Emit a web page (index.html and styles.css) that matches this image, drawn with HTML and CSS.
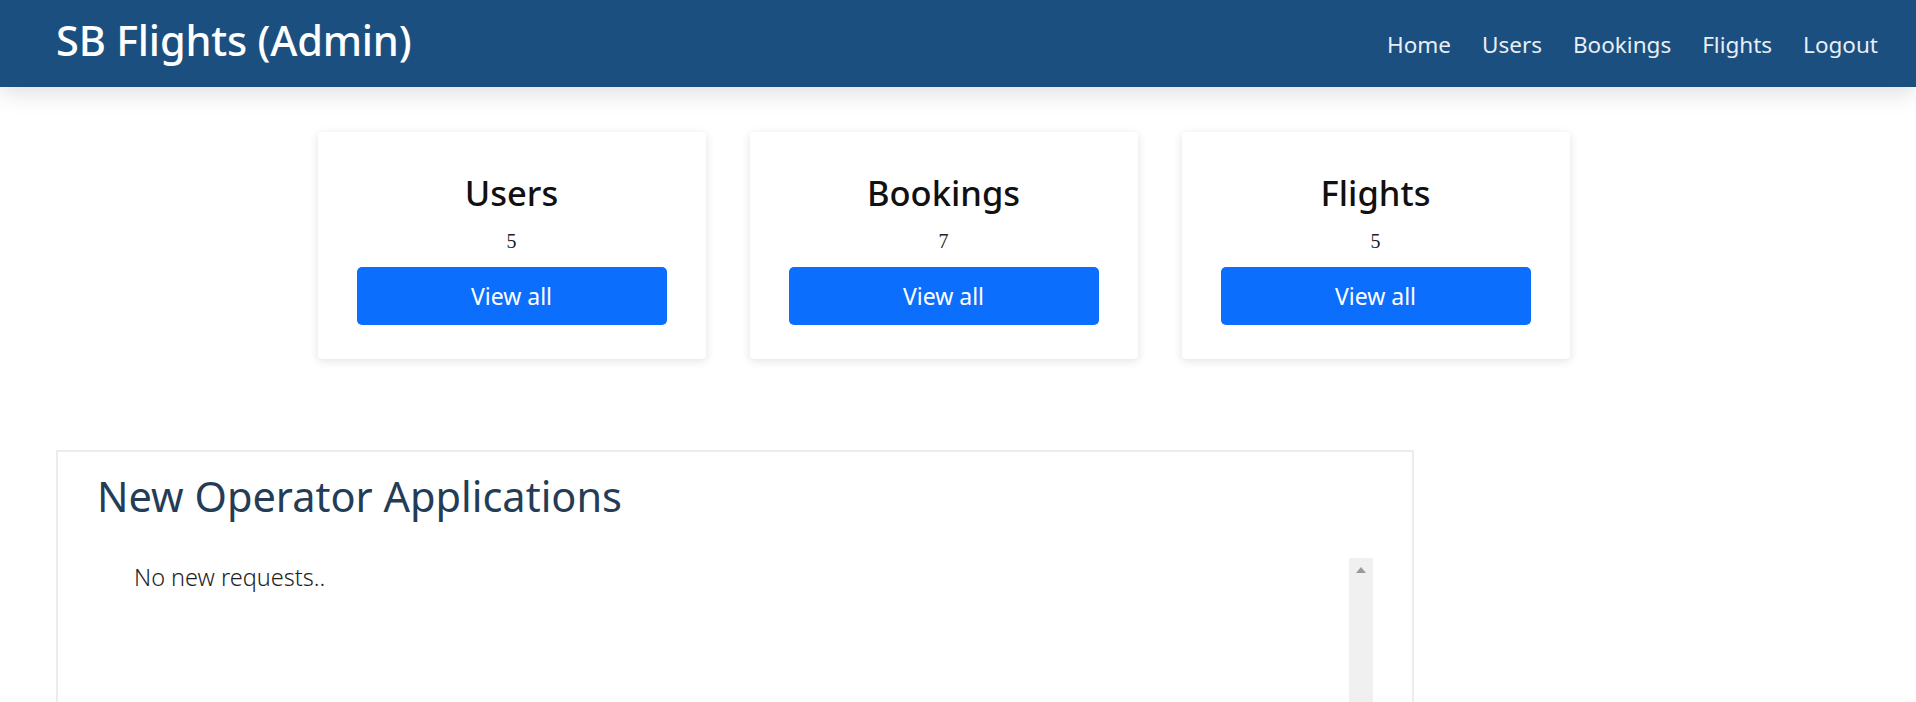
FILE: index.html
```html
<!DOCTYPE html>
<html>
<head>
<meta charset="utf-8">
<link rel="stylesheet" href="styles.css">
</head>
<body>
<header class="navbar">
  <div class="brand">SB Flights (Admin)</div>
  <nav class="nav">
    <a class="nav-link">Home</a>
    <a class="nav-link">Users</a>
    <a class="nav-link">Bookings</a>
    <a class="nav-link">Flights</a>
    <a class="nav-link">Logout</a>
  </nav>
</header>
<main class="page">
  <section class="cards">
    <div class="card">
      <h4 class="card-title">Users</h4>
      <p class="card-count">5</p>
      <button class="btn">View all</button>
    </div>
    <div class="card">
      <h4 class="card-title">Bookings</h4>
      <p class="card-count">7</p>
      <button class="btn">View all</button>
    </div>
    <div class="card">
      <h4 class="card-title">Flights</h4>
      <p class="card-count">5</p>
      <button class="btn">View all</button>
    </div>
  </section>
  <section class="apps">
    <h3 class="apps-title">New Operator Applications</h3>
    <div class="apps-list">
      <div class="apps-content">
        <p class="empty">No new requests..</p>
      </div>
      <div class="scrollbar"><span class="arrow"></span></div>
    </div>
  </section>
</main>
</body>
</html>
```
FILE: styles.css
```css
html, body {
  margin: 0;
  padding: 0;
  background: #ffffff;
  font-family: "Noto Sans", "Open Sans", sans-serif;
  overflow: hidden;
}
.navbar {
  height: 87px;
  background: #1b4f7f;
  display: flex;
  align-items: center;
  justify-content: space-between;
  padding: 0 38px 0 56px;
  box-shadow: 0 6px 22px rgba(0, 0, 0, 0.13);
  position: relative;
  z-index: 1;
}
.brand {
  color: #ffffff;
  font-size: 41.5px;
  font-weight: 500;
  margin-top: -8px;
  letter-spacing: -0.2px;
}
.nav {
  display: flex;
  gap: 31px;
  margin-top: 2px;
}
.nav-link {
  color: #e8eef5;
  font-size: 22.5px;
  text-decoration: none;
}
.page {
  display: flex;
  flex-direction: column;
}
.cards {
  display: flex;
  justify-content: center;
  gap: 44px;
  margin-top: 45px;
  padding-right: 29px;
}
.card {
  width: 388px;
  height: 227px;
  box-sizing: border-box;
  padding: 37px 39px 33px;
  background: #ffffff;
  border-radius: 4px;
  box-shadow: 0 2px 10px rgba(0, 0, 0, 0.12);
  text-align: center;
  display: flex;
  flex-direction: column;
  align-items: stretch;
}
.card-title {
  margin: 0;
  font-size: 34.5px;
  line-height: 48px;
  font-weight: 500;
  color: #111111;
}
.card-count {
  margin: 10px 0 0;
  font-family: "Liberation Serif", serif;
  font-size: 20px;
  line-height: 28px;
  color: #222222;
}
.btn {
  margin-top: 12px;
  height: 58px;
  border: none;
  border-radius: 5px;
  background: #0b6efd;
  color: #ffffff;
  font-family: "Noto Sans", sans-serif;
  font-size: 23px;
  padding-bottom: 2px;
}
.apps {
  margin: 91px 0 0 56px;
  width: 1358px;
  height: 300px;
  box-sizing: border-box;
  border: 2px solid #ececec;
  padding: 17px 39px 0;
}
.apps-title {
  margin: 0;
  font-size: 41.5px;
  line-height: 54px;
  font-weight: 400;
  color: #243c56;
}
.apps-list {
  margin-top: 35px;
  display: flex;
  height: 300px;
}
.apps-content {
  flex: 1;
  padding: 5px 37px;
}
.empty {
  margin: 0;
  font-size: 23.5px;
  line-height: 28px;
  font-weight: 300;
  color: #1e1e1e;
}
.scrollbar {
  width: 24px;
  background: #f0f0f0;
  display: flex;
  justify-content: center;
  padding-top: 9px;
  box-sizing: border-box;
}
.arrow {
  width: 0;
  height: 0;
  border-left: 5px solid transparent;
  border-right: 5px solid transparent;
  border-bottom: 6px solid #9a9a9a;
}
```
